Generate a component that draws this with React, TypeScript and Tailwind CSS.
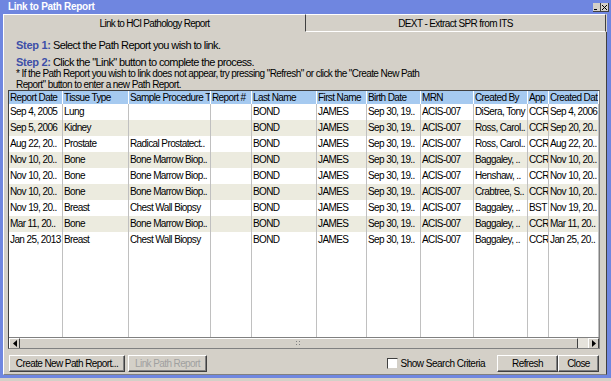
import type { ReactNode } from "react";

const COLUMNS = [
  { label: "Report Date", width: "w-[54px]" },
  { label: "Tissue Type", width: "w-[66px]" },
  { label: "Sample Procedure T", width: "w-[82px]" },
  { label: "Report #", width: "w-[41px]" },
  { label: "Last Name", width: "w-[65px]" },
  { label: "First Name", width: "w-[50px]" },
  { label: "Birth Date", width: "w-[54px]" },
  { label: "MRN", width: "w-[53px]" },
  { label: "Created By", width: "w-[54px]" },
  { label: "App", width: "w-[21px]" },
  { label: "Created Dat", width: "w-[50px]" },
];

const ROWS = [
  ["Sep 4, 2005", "Lung", "", "", "BOND", "JAMES", "Sep 30, 19..", "ACIS-007", "DiSera, Tony", "CCR", "Sep 4, 2006"],
  ["Sep 5, 2006", "Kidney", "", "", "BOND", "JAMES", "Sep 30, 19..", "ACIS-007", "Ross, Carol..", "CCR", "Sep 20, 20.."],
  ["Aug 22, 20..", "Prostate", "Radical Prostatect..", "", "BOND", "JAMES", "Sep 30, 19..", "ACIS-007", "Ross, Carol..", "CCR", "Aug 22, 20.."],
  ["Nov 10, 20..", "Bone", "Bone Marrow Biop..", "", "BOND", "JAMES", "Sep 30, 19..", "ACIS-007", "Baggaley, ..", "CCR", "Nov 10, 20.."],
  ["Nov 10, 20..", "Bone", "Bone Marrow Biop..", "", "BOND", "JAMES", "Sep 30, 19..", "ACIS-007", "Henshaw, ..", "CCR", "Nov 10, 20.."],
  ["Nov 10, 20..", "Bone", "Bone Marrow Biop..", "", "BOND", "JAMES", "Sep 30, 19..", "ACIS-007", "Crabtree, S..", "CCR", "Nov 10, 20.."],
  ["Nov 19, 20..", "Breast", "Chest Wall Biopsy", "", "BOND", "JAMES", "Sep 30, 19..", "ACIS-007", "Baggaley, ..", "BST", "Nov 19, 20.."],
  ["Mar 11, 20..", "Bone", "Bone Marrow Biop..", "", "BOND", "JAMES", "Sep 30, 19..", "ACIS-007", "Baggaley, ..", "CCR", "Mar 11, 20.."],
  ["Jan 25, 2013", "Breast", "Chest Wall Biopsy", "", "BOND", "JAMES", "Sep 30, 19..", "ACIS-007", "Baggaley, ..", "CCR", "Jan 25, 20.."],
];

const Button = ({ children, width, disabled }: { children: ReactNode; width: string; disabled?: boolean }) => (
  <div
    className={`${width} h-[17px] flex items-center justify-center border border-t-white border-l-white border-r-[#404040] border-b-[#404040] shadow-[inset_-1px_-1px_0_#808080] text-[10px] tracking-[-0.6px] ${
      disabled ? "text-[#a0a0a0]" : "text-black"
    }`}
  >
    {children}
  </div>
);

const Arrow = ({ dir }: { dir: "left" | "right" }) => (
  <svg width="4" height="7" viewBox="0 0 4 7">
    {dir === "left" ? <path d="M4 0 L0 3.5 L4 7 Z" fill="#000" /> : <path d="M0 0 L4 3.5 L0 7 Z" fill="#000" />}
  </svg>
);

const App = () => {
  return (
    <div className="w-[611px] h-[381px] bg-[#d4d0c8] font-['Liberation_Sans',Arial,sans-serif] text-black overflow-hidden">
      <div className="w-[611px] h-[378px] bg-[#6f86e0] pl-[3px] pr-[4px] pb-[3px] flex flex-col">
        {/* title bar */}
        <div className="h-[14px] flex items-center justify-between">
          <span className="pl-[5px] text-white text-[10px] font-bold tracking-[-0.3px] leading-none">
            Link to Path Report
          </span>
          <div className="flex mr-[-2px] mt-[1px]">
            <div className="w-[8px] h-[9px] bg-[#d4d0c8] border-r border-b border-[#404040] flex items-end pl-[1px] pb-[1px]">
              <div className="w-[3px] h-[1px] bg-black" />
            </div>
            <div className="w-[8px] h-[9px] bg-[#d4d0c8] border-r border-b border-[#404040] flex items-center justify-center">
              <svg width="5" height="5" viewBox="0 0 5 5">
                <path d="M0 0 L5 5 M5 0 L0 5" stroke="#000" strokeWidth="1" />
              </svg>
            </div>
          </div>
        </div>

        <div className="flex-1 bg-[#d4d0c8] flex flex-col">
          {/* tabs */}
          <div className="h-[18px] flex">
            <div className="w-[302px] border-t border-l border-white flex items-center justify-center text-[10px] tracking-[-0.7px]">
              Link to HCI Pathology Report
            </div>
            <div className="w-[301px] border-t border-t-white border-l border-l-[#404040] border-r border-r-[#404040] border-b border-b-white flex items-center justify-center text-[10px] tracking-[-0.6px]">
              DEXT - Extract SPR from ITS
            </div>
          </div>

          {/* panel */}
          <div className="flex-1 flex flex-col border-l border-l-white border-r border-r-[#404040] border-b border-b-[#808080] pl-[4px] pr-[5px] pt-[7px]">
            <div className="pl-[8px]">
              <div className="h-[12px] flex items-center text-[11px] tracking-[-0.6px]">
                <span className="w-[37px] font-bold text-[#3d4fa8] tracking-[-0.3px]">Step 1:</span>
                <span>Select the Path Report you wish to link.</span>
              </div>
              <div className="h-[12px] mt-[5px] flex items-center text-[11px] tracking-[-0.6px]">
                <span className="w-[37px] font-bold text-[#3d4fa8] tracking-[-0.3px]">Step 2:</span>
                <span>Click the "Link" button to complete the process.</span>
              </div>
              <p className="text-[10px] leading-[11px] tracking-[-0.58px]">
                * If the Path Report you wish to link does not appear, try pressing "Refresh" or click the "Create New Path
                <br />
                Report" button to enter a new Path Report.
              </p>
            </div>

            {/* table */}
            <div className="w-[592px] flex-1 flex flex-col border border-t-[#404040] border-l-[#404040] border-r-[#808080] border-b-[#808080]">
              <div className="flex-1 flex bg-white text-[10px] tracking-[-0.6px]">
                {COLUMNS.map((col, ci) => (
                  <div key={col.label} className={`${col.width} flex flex-col`}>
                    <div className="h-[13px] bg-[#a6caf0] border-r border-white pl-[1px] leading-[13px] whitespace-nowrap overflow-hidden">
                      {col.label}
                    </div>
                    {ROWS.map((row, ri) => (
                      <div
                        key={ri}
                        className={`h-[16px] leading-[16px] pl-[1px] border-r border-[#c0c0c0] whitespace-nowrap overflow-hidden ${
                          ri % 2 === 1 ? "bg-[#ecebdf]" : "bg-white"
                        }`}
                      >
                        {row[ci]}
                      </div>
                    ))}
                    <div className="flex-1 border-r border-[#c0c0c0]" />
                  </div>
                ))}
              </div>

              {/* horizontal scrollbar */}
              <div className="h-[11px] flex bg-[#e6e3dc] border-t border-[#808080]">
                <div className="w-[11px] flex items-center justify-center bg-[#d4d0c8] border-t border-l border-white border-r border-r-[#404040]">
                  <Arrow dir="left" />
                </div>
                <div className="flex-1 flex items-center justify-center bg-[#d4d0c8] border-t border-white border-r border-r-[#404040]">
                  <svg width="5" height="5" viewBox="0 0 5 5">
                    <rect x="0" y="0" width="1" height="1" fill="#808080" />
                    <rect x="0" y="3" width="1" height="1" fill="#808080" />
                    <rect x="3" y="0" width="1" height="1" fill="#808080" />
                    <rect x="3" y="3" width="1" height="1" fill="#808080" />
                  </svg>
                </div>
                <div className="w-[10px]" />
                <div className="w-[11px] flex items-center justify-center bg-[#d4d0c8] border-t border-l border-white border-r border-r-[#404040]">
                  <Arrow dir="right" />
                </div>
              </div>
            </div>

            {/* buttons */}
            <div className="h-[17px] mt-[6px] mb-[2px] flex items-center pl-[1px] pr-[2px]">
              <Button width="w-[116px]">Create New Path Report...</Button>
              <div className="ml-[3px]">
                <Button width="w-[79px]" disabled>
                  Link Path Report
                </Button>
              </div>
              <div className="ml-auto flex items-center">
                <div className="w-[11px] h-[11px] bg-white border border-t-[#404040] border-l-[#404040] border-r-[#d4d0c8] border-b-[#d4d0c8]" />
                <span className="ml-[3px] text-[10px] tracking-[-0.5px]">Show Search Criteria</span>
              </div>
              <div className="ml-[12px] flex">
                <Button width="w-[61px]">Refresh</Button>
                <Button width="w-[41px]">Close</Button>
              </div>
            </div>
          </div>
        </div>
      </div>
    </div>
  );
};

export default App;
